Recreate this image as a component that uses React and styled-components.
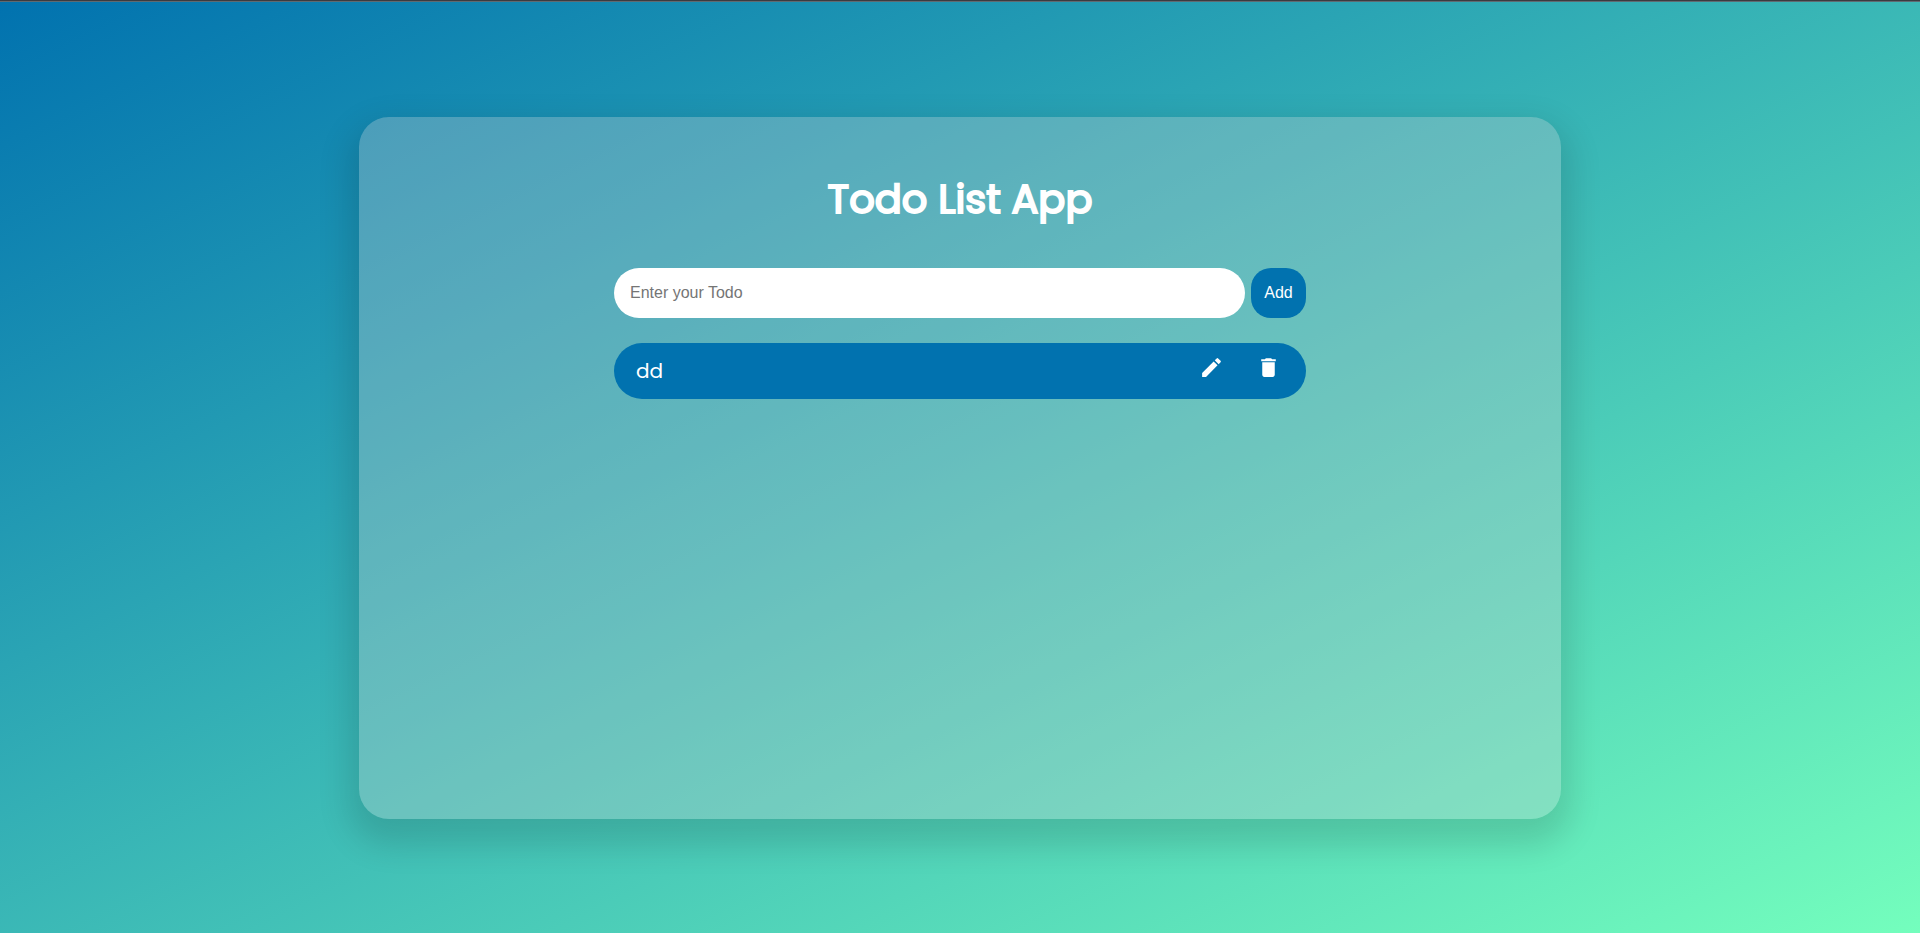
import React, { useState } from "react";
import styled, { createGlobalStyle } from "styled-components";
import { MdEdit, MdDelete } from "react-icons/md";

const GlobalStyle = createGlobalStyle`
  * { box-sizing: border-box; }
  body { margin: 0; }
`;

const Page = styled.div`
  min-height: 100vh;
  display: flex;
  align-items: center;
  justify-content: center;
  padding: 2px 0 0;
  border-top: 1px solid #3b3b40;
  background: linear-gradient(to bottom right, #0172af, #74febd) border-box;
  font-family: Poppins, Inter, sans-serif;
  box-shadow: inset 0 1px 0 #5f6a72;
`;

const Card = styled.main`
  width: 90%;
  max-width: 1202px;
  min-height: 702px;
  padding: 52px 24px;
  display: flex;
  flex-direction: column;
  align-items: center;
  border-radius: 30px;
  background: rgba(210, 210, 210, 0.3);
  box-shadow: 0 16px 32px 10px rgba(0, 0, 0, 0.13);
`;

const Title = styled.h1`
  margin: 0 0 38px;
  font-size: 40px;
  line-height: 61px;
  font-weight: 400;
  color: #fff;
  -webkit-text-stroke: 2px #fff;
`;

const Form = styled.form`
  width: 100%;
  max-width: 692px;
  display: flex;
  gap: 6px;
`;

const TodoInput = styled.input`
  flex: 1;
  min-width: 0;
  height: 50px;
  padding: 0 16px;
  border: 0;
  border-radius: 25px;
  background: #fff;
  font: 16px "Liberation Sans", sans-serif;
  &::placeholder { color: #757575; }
`;

const AddButton = styled.button`
  width: 55px;
  height: 50px;
  padding: 0;
  border: 0;
  border-radius: 20px;
  background: #0172af;
  color: #fff;
  font: 16px "Liberation Sans", sans-serif;
  cursor: pointer;
`;

const TodoList = styled.ul`
  width: 100%;
  max-width: 692px;
  margin: 25px 0 0;
  padding: 0;
  display: flex;
  flex-direction: column;
  gap: 12px;
  list-style: none;
`;

const TodoItem = styled.li`
  display: flex;
  align-items: flex-start;
  justify-content: space-between;
  padding: 12px 25px 12px 22px;
  border-radius: 28px;
  background: #0172af;
  color: #fff;
  font-size: 20px;
  line-height: 32px;
`;

const Actions = styled.div`
  display: flex;
  gap: 32px;
`;

const IconButton = styled.button`
  display: flex;
  padding: 0;
  border: 0;
  background: none;
  color: #fff;
  cursor: pointer;
`;

export default function App() {
  const [todos, setTodos] = useState(["dd"]);
  const [text, setText] = useState("");

  const remove = (index) => setTodos(todos.filter((_, i) => i !== index));
  const add = (event) => {
    event.preventDefault();
    if (!text.trim()) return;
    setTodos([...todos, text]);
    setText("");
  };
  const edit = (index) => {
    setText(todos[index]);
    remove(index);
  };

  return (
    <>
      <GlobalStyle />
      <Page>
        <Card>
          <Title>Todo List App</Title>
          <Form onSubmit={add}>
            <TodoInput
              type="text"
              aria-label="Enter your Todo"
              placeholder="Enter your Todo"
              value={text}
              onChange={(event) => setText(event.target.value)}
            />
            <AddButton type="submit">Add</AddButton>
          </Form>
          <TodoList>
            {todos.map((todo, index) => (
              <TodoItem key={index}>
                <span>{todo}</span>
                <Actions>
                  <IconButton type="button" aria-label="Edit" onClick={() => edit(index)}>
                    <MdEdit size={25} />
                  </IconButton>
                  <IconButton type="button" aria-label="Delete" onClick={() => remove(index)}>
                    <MdDelete size={25} />
                  </IconButton>
                </Actions>
              </TodoItem>
            ))}
          </TodoList>
        </Card>
      </Page>
    </>
  );
}
